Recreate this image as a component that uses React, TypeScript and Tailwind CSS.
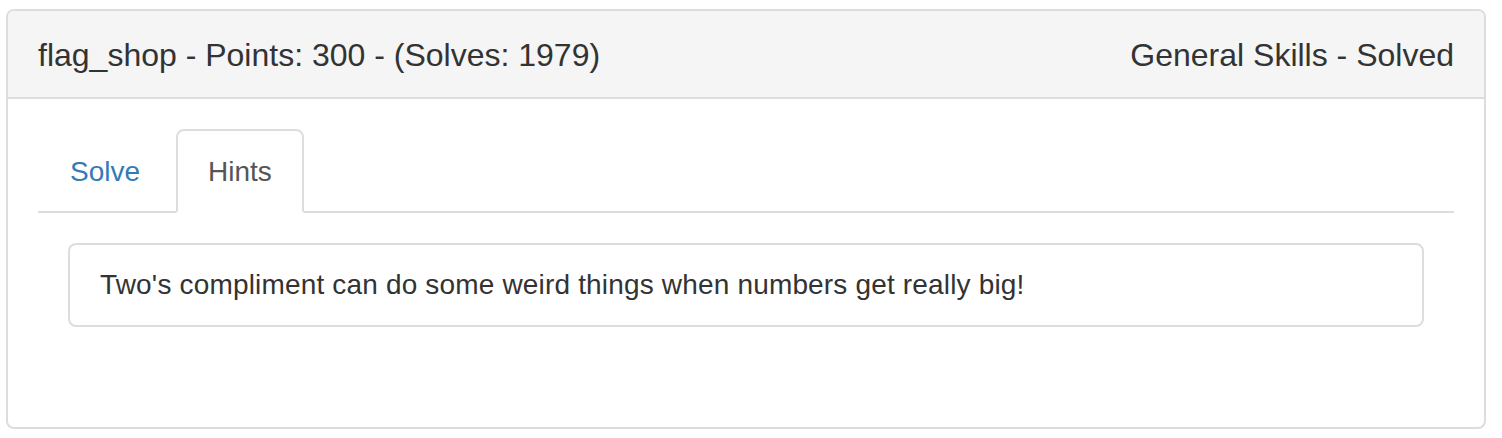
/* Challenge panel: header with title/category, tabs, and the hint box. */

const TABS = ["Solve", "Hints"] as const;

export default function App() {
  const active = "Hints";

  return (
    <div className="min-h-screen bg-white pl-[6px] pt-[9px] font-['Liberation_Sans',Arial,sans-serif] text-[#333]">
      <div className="w-[1480px] h-[420px] rounded-[8px] border-2 border-[#ddd] overflow-hidden flex flex-col">
        {/* Header */}
        <div className="h-[88px] shrink-0 flex items-center justify-between px-[30px] pt-[2px] bg-[#f5f5f5] border-b-2 border-[#ddd] text-[32px] leading-none">
          <span>flag_shop - Points: 300 - (Solves: 1979)</span>
          <span>General Skills - Solved</span>
        </div>

        {/* Body */}
        <div className="px-[30px] pt-[30px]">
          <ul className="flex border-b-2 border-[#ddd]">
            {TABS.map((tab) => (
              <li key={tab} className="mr-[4px] -mb-[2px]">
                <a
                  className={
                    tab === active
                      ? "h-[84px] flex items-center px-[30px] pt-[2px] text-[28px] text-[#555] bg-white border-2 border-[#ddd] border-b-transparent rounded-t-[8px]"
                      : "h-[84px] flex items-center px-[30px] pt-[2px] text-[28px] text-[#337ab7] border-2 border-transparent rounded-t-[8px]"
                  }
                >
                  {tab}
                </a>
              </li>
            ))}
          </ul>

          <div className="pt-[30px] px-[30px]">
            <div className="h-[84px] flex items-center px-[30px] border-2 border-[#ddd] rounded-[8px] text-[28px] tracking-[0.17px]">
              Two's compliment can do some weird things when numbers get really big!
            </div>
          </div>
        </div>
      </div>
    </div>
  );
}
